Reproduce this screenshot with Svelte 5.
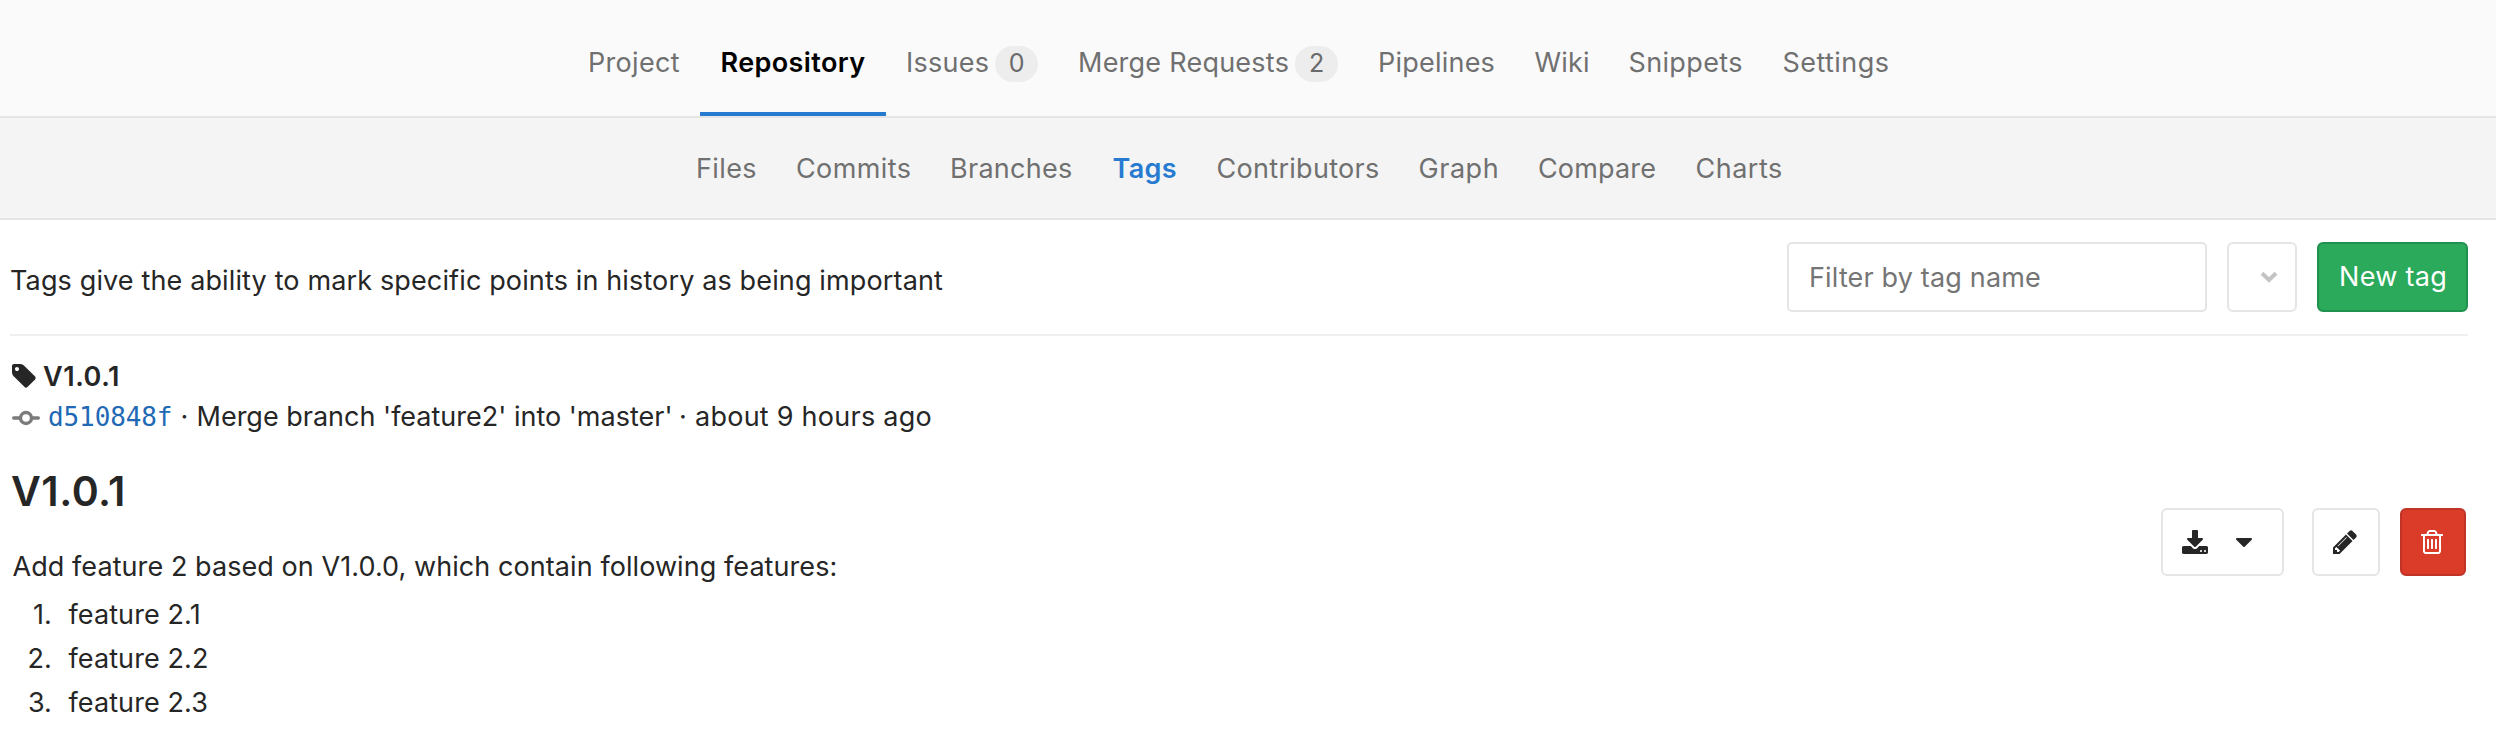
<script>
  // w: tab width, ls: letter spacing
  const tabs = [
    { label: 'Project', w: 132, ls: 0.3 },
    { label: 'Repository', w: 186, ls: 0.4, active: true },
    { label: 'Issues', w: 172, ls: 0.25, count: 0, gap: 6 },
    { label: 'Merge Requests', w: 300, ls: 0.24, count: 2, gap: 6 },
    { label: 'Pipelines', w: 156.5, ls: 0.22 },
    { label: 'Wiki', w: 94, ls: 0.15 },
    { label: 'Snippets', w: 154, ls: 0.35 },
    { label: 'Settings', w: 145, ls: 0.45 }
  ];
  const subTabs = [
    { label: 'Files', w: 100, ls: 0.38 },
    { label: 'Commits', w: 154, ls: 0.4 },
    { label: 'Branches', w: 162.5, ls: 0.28 },
    { label: 'Tags', w: 104, ls: 0.35 , active: true },
    { label: 'Contributors', w: 202, ls: 0.3 },
    { label: 'Graph', w: 119.5, ls: 0.55 },
    { label: 'Compare', w: 157.5, ls: 0.15 },
    { label: 'Charts', w: 127, ls: 0.5 }
  ];
  const features = ['feature 2.1', 'feature 2.2', 'feature 2.3'];
</script>

<nav class="tabs">
  {#each tabs as t}
    <a class="tab" class:active={t.active} style="width:{t.w}px;letter-spacing:{t.ls}px">
      <span>{t.label}</span>{#if t.count !== undefined}<span class="badge" style="margin-left:{t.gap}px">{t.count}</span>{/if}
    </a>
  {/each}
</nav>
<nav class="subtabs">
  {#each subTabs as t}
    <a class="subtab" class:active={t.active} style="width:{t.w}px;letter-spacing:{t.ls}px">{t.label}</a>
  {/each}
</nav>

<main>
  <header>
    <p class="intro">Tags give the ability to mark specific points in history as being important</p>
    <input class="filter" type="text" placeholder="Filter by tag name" />
    <button class="btn sort" aria-label="Sort">
      <svg width="18" height="12" viewBox="0 0 18 12"><path d="M2 2.2 9 9 16 2.2" fill="none" stroke="#c4c4c4" stroke-width="4" /></svg>
    </button>
    <button class="btn new">New tag</button>
  </header>

  <section class="row">
    <div class="info">
      <div class="line name">
        <svg class="tagicon" width="28" height="28" viewBox="0 0 1792 1792"><path fill="currentColor" d="M576 448q0-53-37.5-90.5t-90.5-37.5-90.5 37.5-37.5 90.5 37.5 90.5 90.5 37.5 90.5-37.5 37.5-90.5zm1067 576q0 53-37 90l-491 492q-39 37-91 37-53 0-90-37l-715-716q-38-37-64.5-101t-26.5-117v-416q0-52 38-90t90-38h416q53 0 117 26.5t102 64.5l715 714q37 39 37 91z" /></svg>
        <span>V1.0.1</span>
      </div>
      <div class="line">
        <svg class="commiticon" width="28" height="16" viewBox="0 0 28 16"><g fill="none" stroke="#7b7b7b" stroke-width="3.4"><circle cx="14" cy="8" r="5.5" /><path stroke-linecap="round" d="M1.7 8H8M20 8h6.3" /></g></svg>
        <a class="sha">d510848f</a>
        <span class="dot">·</span>
        <span class="msg">Merge branch 'feature2' into 'master'</span>
        <span class="dot">·</span>
        <span class="ago">about 9 hours ago</span>
      </div>
      <h1>V1.0.1</h1>
      <p class="desc">Add feature 2 based on V1.0.0, which contain following features:</p>
      <ol>
        {#each features as f, i}
          <li><span class="num">{i + 1}.</span><span>{f}</span></li>
        {/each}
      </ol>
    </div>
    <div class="actions">
      <button class="btn download" aria-label="Download">
        <svg width="28" height="28" viewBox="0 0 1792 1792"><path fill="currentColor" d="M1344 1344q0-26-19-45t-45-19-45 19-19 45 19 45 45 19 45-19 19-45zm256 0q0-26-19-45t-45-19-45 19-19 45 19 45 45 19 45-19 19-45zm128-224v320q0 40-28 68t-68 28h-1472q-40 0-68-28t-28-68v-320q0-40 28-68t68-28h465l135 136q58 56 136 56t136-56l136-136h464q40 0 68 28t28 68zm-325-569q17 41-14 70l-448 448q-18 19-45 19t-45-19l-448-448q-31-29-14-70 17-39 59-39h256v-448q0-26 19-45t45-19h256q26 0 45 19t19 45v448h256q42 0 59 39z" /></svg>
        <svg class="caret" width="16" height="9" viewBox="0 0 16 9"><path fill="currentColor" d="M1 0h14q1 0 1 1 0 .4-.3.7L8.7 8.7q-.7.6-1.4 0L.3 1.7Q0 1.4 0 1q0-1 1-1z" /></svg>
      </button>
      <button class="btn edit" aria-label="Edit">
        <svg width="28" height="28" viewBox="0 0 1792 1792"><path fill="currentColor" d="M491 1536l91-91-235-235-91 91v107h128v128h107zm523-928q0-22-22-22-10 0-17 7l-542 542q-7 7-7 17 0 22 22 22 10 0 17-7l542-542q7-7 7-17zm-54-192l416 416-832 832h-416v-416zm683 96q0 53-37 90l-166 166-416-416 166-165q36-38 90-38 53 0 91 38l235 234q37 39 37 91z" /></svg>
      </button>
      <button class="btn delete" aria-label="Delete">
        <svg width="28" height="28" viewBox="0 0 1792 1792"><path fill="currentColor" d="M704 736v576q0 14-9 23t-23 9h-64q-14 0-23-9t-9-23v-576q0-14 9-23t23-9h64q14 0 23 9t9 23zm256 0v576q0 14-9 23t-23 9h-64q-14 0-23-9t-9-23v-576q0-14 9-23t23-9h64q14 0 23 9t9 23zm256 0v576q0 14-9 23t-23 9h-64q-14 0-23-9t-9-23v-576q0-14 9-23t23-9h64q14 0 23 9t9 23zm128 724v-948h-896v948q0 22 7 40.5t14.5 27 10.5 8.5h832q3 0 10.5-8.5t14.5-27 7-40.5zm-672-1076h448l-48-117q-7-9-17-11h-317q-10 2-17 11zm928 32v64q0 14-9 23t-23 9h-96v948q0 83-47 143.5t-113 60.5h-832q-66 0-113-58.5t-47-141.5v-952h-96q-14 0-23-9t-9-23v-64q0-14 9-23t23-9h309l70-167q15-37 54-63t79-26h320q40 0 79 26t54 63l70 167h309q14 0 23 9t9 23z" /></svg>
      </button>
    </div>
  </section>
</main>

<style>
  :global(body) {
    background: #fff;
    color: #262626;
    font-family: Inter, sans-serif;
    font-size: 27px;
    overflow: hidden;
  }
  :global(*) { box-sizing: border-box; }
  svg { display: block; flex: none; }
  p, h1, ol { margin: 0; padding: 0; }

  .tabs, .subtabs {
    display: flex;
    color: #707070;
    white-space: nowrap;
    border-bottom: 2px solid #e5e5e5;
  }
  .tabs { height: 118px; background: #fafafa; padding-left: 568px; }
  .tab {
    display: flex;
    flex: none;
    align-items: baseline;
    padding: 46px 0 0 20px;
    line-height: 33px;
    height: 116px;
  }
  .tab.active { padding-left: 20.5px; color: #000; font-weight: 600; border-bottom: 4px solid #267bd1; }
  .badge {
    width: 43px;
    height: 36px;
    padding-bottom: 2px;
    line-height: 34px;
    font-size: 25px;
    letter-spacing: 0;
    text-align: center;
    color: #6a6a6a;
    background: #ededed;
    border-radius: 18px;
  }
  .subtabs { height: 102px; background: #f4f4f4; padding-left: 676px; }
  .subtab { flex: none; padding-left: 20px; line-height: 101px; height: 100px; }
  .subtab.active { color: #267bd1; font-weight: 600; }

  main { padding: 0 28px 0 10px; }
  header {
    display: flex;
    align-items: center;
    height: 116px;
    border-bottom: 2px solid #efefef;
  }
  .intro { flex: 1; padding-top: 7px; line-height: 33px; letter-spacing: 0.136px; }
  .filter {
    width: 420px;
    height: 70px;
    margin: 0 20px 0 0;
    padding: 1px 0 0 20px;
    border: 2px solid #e5e5e5;
    border-radius: 5px;
    font: inherit;
    letter-spacing: 0.16px;
    background: #fff;
    outline: none;
  }
  .filter::placeholder { color: #757575; opacity: 1; }
  .btn {
    display: flex;
    align-items: center;
    flex: none;
    padding: 0;
    color: #262626;
    background: #fff;
    border: 2px solid #e5e5e5;
    border-radius: 6px;
    font: inherit;
  }
  .sort { width: 70px; height: 70px; margin-right: 20px; padding: 0 0 1px 31px; }
  .new {
    width: 151px;
    height: 70px;
    padding: 0 0 1px 20px;
    color: #fff;
    background: #2aaa5a;
    border-color: #219150;
    letter-spacing: 0.3px;
  }

  .row { display: flex; align-items: center; justify-content: space-between; height: 412px; }
  .info { align-self: flex-start; padding-top: 21px; }
  .line { display: flex; align-items: baseline; height: 40px; line-height: 40px; white-space: nowrap; }
  .name { font-weight: 600; letter-spacing: 0.56px; }
  .tagicon { align-self: flex-start; margin-top: 5px; margin-right: 5px; }
  .commiticon { align-self: flex-start; margin: 13px 8px 0 2px; }
  .sha {
    width: 132.5px;
    font-family: "DejaVu Sans Mono", monospace;
    font-size: 26px;
    letter-spacing: -0.1px;
    color: #1f69b5;
  }
  .dot { width: 16px; flex: none; }
  .msg { letter-spacing: 0; width: 482.5px; }
  .ago { letter-spacing: 0.25px; }
  h1 { margin-top: 24px; padding-left: 1px; font-size: 41px; font-weight: 600; line-height: 60px; letter-spacing: 0.51px; }
  .desc { margin-top: 23px; padding-left: 2.5px; line-height: 45px; letter-spacing: 0.073px; }
  ol { list-style: none; margin-top: 3px; }
  li { display: flex; height: 44px; line-height: 45px; letter-spacing: 0.1px; }
  .num { width: 42px; margin-right: 16.5px; text-align: right; }

  .actions { display: flex; }
  .download { width: 123px; height: 68px; margin-right: 28px; padding-left: 18px; }
  .download svg:first-child { margin-top: 4px; }
  .caret { margin: 1px 0 0 27px; }
  .edit { width: 68px; height: 68px; margin-right: 20px; padding-left: 17px; }
  .delete { width: 66px; height: 68px; margin-right: 2px; padding-left: 16px; color: #fff; background: #db3b29; border-color: #bf3427; }
</style>
